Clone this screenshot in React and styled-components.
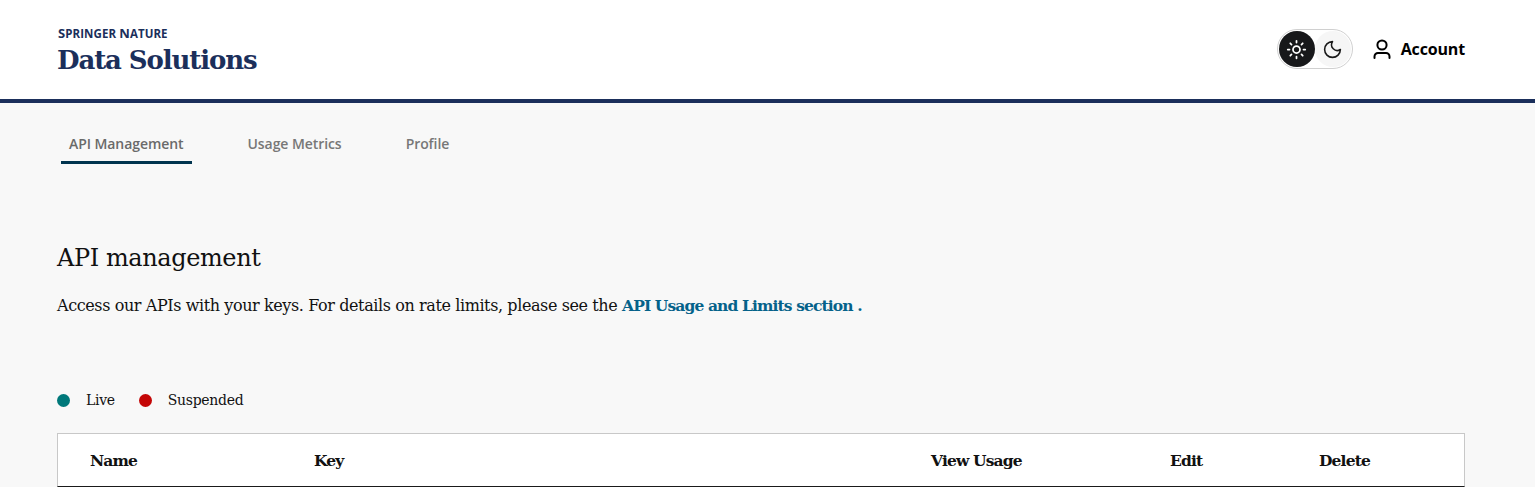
import React from 'react'
import styled, { createGlobalStyle } from 'styled-components'

const SERIF = '"DejaVu Serif", "Liberation Serif", serif'
const SANS = '"Open Sans", "Noto Sans", sans-serif'

const Global = createGlobalStyle`
  html, body {
    margin: 0;
    padding: 0;
    background: #f8f8f8;
    overflow: hidden;
  }
  * { box-sizing: border-box; }
`

const Header = styled.header`
  height: 103px;
  background: #fff;
  border-bottom: 4px solid #1b2f5b;
  padding: 0 70px 1px 57px;
  display: flex;
  align-items: center;
  justify-content: space-between;
`

const Brand = styled.div`
  display: flex;
  flex-direction: column;
  gap: 3px;
  margin-top: 5px;
  color: #1b2f5b;
`

const BrandTop = styled.div`
  font-family: ${SANS};
  font-weight: 700;
  font-size: 11.5px;
  line-height: 12px;
  letter-spacing: 0.08px;
  margin-left: 1px;
`

const BrandCap = styled.span`
  font-size: 13px;
`

const BrandName = styled.div`
  font-family: ${SERIF};
  font-weight: 700;
  font-size: 26px;
  line-height: 34px;
  letter-spacing: -1.1px;
`

const Actions = styled.div`
  display: flex;
  align-items: center;
  gap: 20px;
`

const Toggle = styled.div`
  width: 76px;
  height: 40px;
  border: 1px solid #d0d0d0;
  border-radius: 20px;
  background: #fff;
  padding: 1px;
  display: flex;
`

const ToggleOption = styled.div`
  width: 36px;
  height: 36px;
  border-radius: 50%;
  display: flex;
  align-items: center;
  justify-content: center;
  color: ${p => (p.$active ? '#fff' : '#1a1a1a')};
  background: ${p => (p.$active ? '#17181a' : '#f6f6f6')};
`

const Account = styled.div`
  display: flex;
  align-items: center;
  gap: 10px;
  font-family: ${SANS};
  font-weight: 700;
  font-size: 16px;
  letter-spacing: -0.15px;
  color: #000;
`

const Tabs = styled.nav`
  display: flex;
  gap: 48px;
  padding: 24px 0 0 61px;
`

const Tab = styled.div`
  height: 37px;
  padding: 0 8px;
  font-family: ${SANS};
  font-weight: 600;
  font-size: 14px;
  line-height: 34px;
  letter-spacing: -0.07px;
  color: ${p => (p.$active ? '#6a6a6a' : '#777')};
  border-bottom: 3px solid ${p => (p.$active ? '#00344f' : 'transparent')};
`

const Main = styled.main`
  padding: 78px 70px 0 57px;
`

const Title = styled.h1`
  margin: 0;
  font-family: ${SERIF};
  font-weight: 400;
  font-size: 24px;
  line-height: 32px;
  letter-spacing: -0.4px;
  color: #111;
`

const Intro = styled.p`
  margin: 20px 0 0;
  font-family: ${SERIF};
  font-size: 16px;
  line-height: 24px;
  letter-spacing: -0.4px;
  color: #111;
`

const IntroLink = styled.a`
  color: #05628a;
  font-weight: 700;
  font-size: 15.5px;
  letter-spacing: -0.88px;
`

const Legend = styled.div`
  display: flex;
  align-items: center;
  margin-top: 70px;
  height: 24px;
  font-family: ${SERIF};
  font-size: 14px;
  letter-spacing: -0.3px;
  color: #111;
`

const Dot = styled.span`
  width: 13px;
  height: 13px;
  border-radius: 50%;
  background: ${p => p.$color};
  margin-right: 16px;
`

const LegendLabel = styled.span`
  margin-right: 24px;
`

const Table = styled.div`
  margin-top: 21px;
  background: #fff;
  border: 1px solid #c8c8c8;
  border-bottom: 1px solid #1a1a1a;
  height: 54px;
  display: grid;
  grid-template-columns: 224px 617px 239px 149px 1fr;
  align-items: center;
  padding-left: 32px;
  font-family: ${SERIF};
  font-weight: 700;
  font-size: 15.5px;
  letter-spacing: -0.85px;
  color: #111;
`

const SunIcon = () => (
  <svg width="21" height="21" viewBox="0 0 24 24" fill="none" stroke="currentColor" strokeWidth="2" strokeLinecap="round">
    <circle cx="12" cy="12" r="4" />
    <path d="M12 2v2M12 20v2M2 12h2M20 12h2M4.9 4.9l1.4 1.4M17.7 17.7l1.4 1.4M4.9 19.1l1.4-1.4M17.7 6.3l1.4-1.4" />
  </svg>
)

const MoonIcon = () => (
  <svg width="21" height="21" viewBox="0 0 24 24" fill="none" stroke="currentColor" strokeWidth="1.8" strokeLinecap="round" strokeLinejoin="round">
    <path d="M12 3a6.5 6.5 0 0 0 9 9 9 9 0 1 1-9-9Z" />
  </svg>
)

const UserIcon = () => (
  <svg width="18" height="20" viewBox="0 0 18 20" fill="none" stroke="#000" strokeWidth="2" strokeLinecap="round">
    <circle cx="9" cy="6" r="4.6" />
    <path d="M1.5 19v-1.5a3.5 3.5 0 0 1 3.5-3.5h8a3.5 3.5 0 0 1 3.5 3.5V19" />
  </svg>
)

export default function App() {
  return (
    <>
      <Global />
      <Header>
        <Brand>
          <BrandTop><BrandCap>S</BrandCap>PRINGER <BrandCap>N</BrandCap>ATURE</BrandTop>
          <BrandName>Data Solutions</BrandName>
        </Brand>
        <Actions>
          <Toggle>
            <ToggleOption $active><SunIcon /></ToggleOption>
            <ToggleOption><MoonIcon /></ToggleOption>
          </Toggle>
          <Account><UserIcon />Account</Account>
        </Actions>
      </Header>
      <Tabs>
        <Tab $active>API Management</Tab>
        <Tab>Usage Metrics</Tab>
        <Tab>Profile</Tab>
      </Tabs>
      <Main>
        <Title>API management</Title>
        <Intro>
          Access our APIs with your keys. For details on rate limits, please see the{' '}
          <IntroLink>API Usage and Limits section .</IntroLink>
        </Intro>
        <Legend>
          <Dot $color="#00787a" /><LegendLabel>Live</LegendLabel>
          <Dot $color="#c40606" /><LegendLabel>Suspended</LegendLabel>
        </Legend>
        <Table>
          <span>Name</span>
          <span>Key</span>
          <span>View Usage</span>
          <span>Edit</span>
          <span>Delete</span>
        </Table>
      </Main>
    </>
  )
}
